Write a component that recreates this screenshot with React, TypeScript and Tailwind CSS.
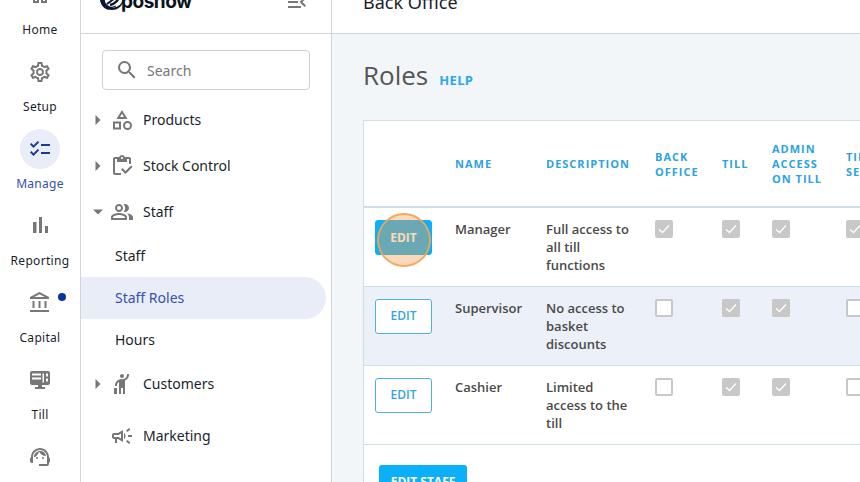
import type { ReactNode } from "react";
import {
  MdChecklist,
  MdHail,
  MdMenuOpen,
  MdOutlineAccountBalance,
  MdOutlineCampaign,
  MdOutlineCategory,
  MdOutlineHome,
  MdOutlineInventory,
  MdOutlinePeopleAlt,
  MdOutlineSettings,
  MdOutlineSupportAgent,
  MdSearch,
} from "react-icons/md";

function TillIcon() {
  return (
    <svg viewBox="0 0 24 24" className="size-6" fill="currentColor" aria-hidden="true">
      <path
        fillRule="evenodd"
        d="M4 3h16a2 2 0 0 1 2 2v10a2 2 0 0 1-2 2h-6v2h3v2H7v-2h3v-2H4a2 2 0 0 1-2-2V5a2 2 0 0 1 2-2zM4 5.500v2h9v-2zm0 4v2h9v-2zm10.500-4v9H16v-9zm3.500 0v3h2v-3zm0 5v3h2v-3z"
      />
    </svg>
  );
}

function ReportIcon() {
  return (
    <svg viewBox="0 0 24 24" className="size-6" fill="currentColor" aria-hidden="true">
      <path d="M5 8h3.500v11H5zM11 3h3v16h-3zM17 12h3v7h-3z" />
    </svg>
  );
}

type RailItem = { id: string; label: string; icon: ReactNode; active?: boolean; dot?: boolean };

const rail: RailItem[] = [
  { id: "home", label: "Home", icon: <MdOutlineHome className="size-6" /> },
  { id: "setup", label: "Setup", icon: <MdOutlineSettings className="size-6" /> },
  { id: "manage", label: "Manage", icon: <MdChecklist className="size-6" />, active: true },
  { id: "reporting", label: "Reporting", icon: <ReportIcon /> },
  { id: "capital", label: "Capital", icon: <MdOutlineAccountBalance className="size-6" />, dot: true },
  { id: "till", label: "Till", icon: <TillIcon /> },
  { id: "support", label: "", icon: <MdOutlineSupportAgent className="size-6" /> },
];

function Rail() {
  return (
    <nav className="w-20 shrink-0 pt-[5px]">
      {rail.map((item) => (
        <a key={item.id} href="#" aria-label={item.id} className="flex h-[77px] flex-col items-center gap-[5px]">
          <span
            className={
              item.active
                ? "relative flex size-10 items-center justify-center rounded-full bg-[#e8edf8] text-[#1c3a94]"
                : "relative flex size-10 items-center justify-center text-[#777]"
            }
          >
            {item.icon}
            {item.dot && <span className="absolute -right-1.5 top-2.5 size-2 rounded-full bg-[#0634a4]" />}
          </span>
          <span
            className={
              item.active
                ? "text-xs leading-5 tracking-wide text-[#3550ad]"
                : "text-xs leading-5 tracking-wide text-[#1b1f2a]"
            }
          >
            {item.label}
          </span>
        </a>
      ))}
    </nav>
  );
}

function Caret({ open }: { open?: boolean }) {
  return (
    <svg viewBox="0 0 12 12" className="size-3 text-[#777]" fill="currentColor" aria-hidden="true">
      {open ? <path d="M1 3.500h10L6 8.500z" /> : <path d="M3.500 1v10l5-5z" />}
    </svg>
  );
}

function MenuRow({ label, icon, open, leaf }: { label: string; icon: ReactNode; open?: boolean; leaf?: boolean }) {
  return (
    <button type="button" className="flex h-[46px] w-full items-center pl-[11px] text-left text-sm text-[#1b1f2a]">
      <span className="flex w-3">{!leaf && <Caret open={open} />}</span>
      <span className="ml-1.5 mr-[9px] flex text-[#777]">{icon}</span>
      {label}
    </button>
  );
}

function SubRow({ label, active }: { label: string; active?: boolean }) {
  return (
    <a
      href="#"
      className={
        active
          ? "mr-[5px] flex h-[42px] items-center rounded-r-full bg-[#e9edf8] pl-[34px] text-sm text-[#3550ad]"
          : "mr-[5px] flex h-[42px] items-center pl-[34px] text-sm text-[#1b1f2a]"
      }
    >
      {label}
    </a>
  );
}

function Sidebar() {
  return (
    <aside className="w-[252px] shrink-0 border-x border-[#d3d5d9]">
      <div className="flex h-16 items-center border-b border-[#d3d5d9] pl-[18px] pr-[22px]">
        <svg viewBox="0 0 26 26" className="size-[26px]" aria-hidden="true">
          <circle cx="13" cy="9" r="12" fill="#0b1830" />
          <circle cx="14.500" cy="9.500" r="9" fill="#fff" />
          <path d="M8 15L20 6" fill="none" stroke="#0b1830" strokeWidth="2" />
          <path d="M20 6c0 5-4 9-9 10" fill="none" stroke="#0b1830" strokeWidth="2.500" />
          <path d="M4 16c3 3 8 3 13 1" fill="none" stroke="#0b1830" strokeWidth="1" />
          <path d="M1 9c0 7 4 11 9 12-4-4-5-7-4-12z" fill="#0b1830" />
        </svg>
        <span className="-ml-1 font-['Inter',sans-serif] text-[19px] font-bold leading-6 tracking-tight text-[#0b1220]">
          posnow
        </span>
        <button type="button" aria-label="Collapse menu" className="ml-auto text-[#777]">
          <MdMenuOpen className="size-6" />
        </button>
      </div>
      <label className="mx-[21px] mb-[7px] mt-4 flex h-10 items-center gap-2 rounded border border-[#cfd1d5] px-3 text-[#777]">
        <MdSearch className="size-6 shrink-0" />
        <input
          type="text"
          aria-label="Search"
          placeholder="Search"
          className="w-full min-w-0 bg-transparent pt-px text-sm outline-none placeholder:text-[#777]"
        />
      </label>
      <MenuRow label="Products" icon={<MdOutlineCategory className="size-6" />} />
      <MenuRow label="Stock Control" icon={<MdOutlineInventory className="size-6" />} />
      <MenuRow label="Staff" icon={<MdOutlinePeopleAlt className="size-6" />} open />
      <SubRow label="Staff" />
      <SubRow label="Staff Roles" active />
      <SubRow label="Hours" />
      <MenuRow label="Customers" icon={<MdHail className="size-6" />} />
      <div className="mt-1.5">
        <MenuRow label="Marketing" icon={<MdOutlineCampaign className="size-6" />} leaf />
      </div>
    </aside>
  );
}

function Tick({ on, label }: { on: boolean; label: string }) {
  return (
    <span className="grid size-[18px]">
      <input
        type="checkbox"
        checked={on}
        disabled
        readOnly
        aria-label={label}
        className="col-start-1 row-start-1 size-[18px] appearance-none rounded-xs border-2 border-[#c8c8c8] bg-white checked:bg-[#c8c8c8]"
      />
      {on && (
        <svg viewBox="0 0 18 18" className="col-start-1 row-start-1 size-[18px]" fill="none" stroke="#fff" aria-hidden="true">
          <path d="M4 9.500l3.500 3 6.500-7" strokeWidth="1.300" />
        </svg>
      )}
    </span>
  );
}

const columns = [
  { title: "", width: "w-20" },
  { title: "Name", width: "w-[91px]" },
  { title: "Description", width: "w-[109px]" },
  { title: "Back Office", width: "w-[67px]" },
  { title: "Till", width: "w-[50px]" },
  { title: "Admin Access on Till", width: "w-[74px]" },
  { title: "Till Settings", width: "w-[100px]" },
];

const roles = [
  { name: "Manager", description: "Full access to all till functions", access: [true, true, true, true] },
  { name: "Supervisor", description: "No access to basket discounts", access: [false, true, true, false] },
  { name: "Cashier", description: "Limited access to the till", access: [false, true, true, false] },
];

function RolesTable() {
  return (
    <table className="w-[571px] table-fixed border-collapse text-left text-[13px] font-semibold leading-[18px] text-[#4a4a4a]">
      <thead>
        <tr className="h-[86px] border-b-2 border-[#cfe0e4]">
          {columns.map((c) => (
            <th
              key={c.title}
              className={`${c.width} pl-[11px] align-middle text-[11px] font-bold uppercase leading-[15px] tracking-[1px] text-[#2ba3dd]`}
            >
              {c.title}
            </th>
          ))}
        </tr>
      </thead>
      <tbody>
        {roles.map((role, i) => (
          <tr key={role.name} className="h-[79px] border-b border-[#cfe0e4] align-top even:bg-[#ecf0f8]">
            <td className="pl-[11px] pt-3">
              <span className="relative flex">
                <button
                  type="button"
                  className={
                    i === 0
                      ? "h-[35px] w-[57px] rounded-[3px] border border-[#0cb0f8] bg-[#0cb0f8] text-xs font-bold text-white"
                      : "h-[35px] w-[57px] rounded-[3px] border border-[#4fb0dd] bg-white text-xs font-semibold text-[#35a5dc]"
                  }
                >
                  EDIT
                </button>
                {i === 0 && (
                  <span className="absolute -top-[7px] left-0.5 size-[54px] rounded-full border-2 border-[#f0a55a]/90 bg-[#f7a04d]/40" />
                )}
              </span>
            </td>
            <td className="pl-[11px] pt-3">{role.name}</td>
            <td className="pl-[11px] pr-3 pt-3">{role.description}</td>
            {role.access.map((on, j) => (
              <td key={j} className="pl-[11px] pt-3">
                <Tick on={on} label={`${role.name}: ${columns[j + 3].title}`} />
              </td>
            ))}
          </tr>
        ))}
      </tbody>
    </table>
  );
}

export default function App() {
  return (
    <div className="h-screen overflow-hidden bg-white font-['Noto_Sans',sans-serif]">
      <div className="-mt-[30px] flex min-h-[calc(100vh+30px)]">
        <Rail />
        <Sidebar />
        <main className="flex min-w-0 flex-1 flex-col">
          <header className="flex h-16 shrink-0 items-center border-b border-[#d3d5d9] pl-[31px] text-lg text-[#1b1f2a]">
            Back Office
          </header>
          <div className="flex-1 bg-[#f2f6f9] pl-[31px] font-['Open_Sans',sans-serif]">
            <div className="flex h-[86px] items-baseline gap-[11px] pt-[23px]">
              <h1 className="text-[26px] leading-9 text-[#555]">Roles</h1>
              <a href="#" className="text-[13px] font-bold tracking-wide text-[#2ba8e8]">
                HELP
              </a>
            </div>
            <section className="overflow-hidden border border-r-0 border-[#cfe0e4] bg-white">
              <RolesTable />
              <div className="px-[15px] py-5">
                <button
                  type="button"
                  className="h-[35px] w-[88px] rounded-[3px] bg-[#0cb0f8] text-xs font-bold text-white"
                >
                  EDIT STAFF
                </button>
              </div>
            </section>
          </div>
        </main>
      </div>
    </div>
  );
}
